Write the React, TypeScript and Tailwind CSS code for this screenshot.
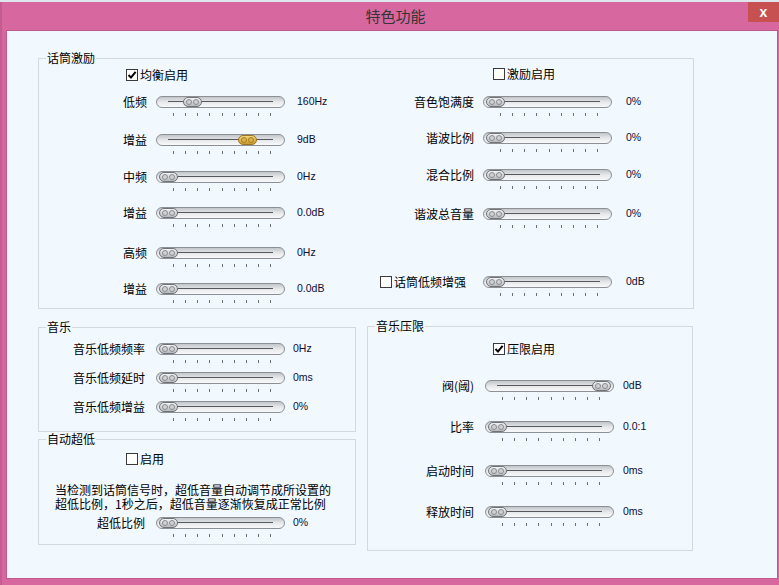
import type { ReactNode } from "react";
import clsx from "clsx";

const TICKS = [0, 1, 2, 3, 4, 5, 6, 7, 8];

function Slider({ pos = 0, gold = false }: { pos?: number; gold?: boolean }) {
  return (
    <div className="w-[129px] shrink-0">
      <div className="relative h-[12px] rounded-full border border-[#8c9094] bg-gradient-to-b from-[#c2c6ca] via-[#e6e8ea] to-[#f8f9fa]">
        <div className="absolute left-[11px] right-[11px] top-[4px] h-px bg-[#55595d]" />
        <div
          className={clsx(
            "absolute top-0 flex h-[10px] w-[19px] items-center justify-center gap-px rounded-full border",
            gold
              ? "border-[#9a7420] bg-gradient-to-b from-[#f3d77c] to-[#c8982c]"
              : "border-[#6f7377] bg-gradient-to-b from-[#f2f3f4] to-[#b6babe]"
          )}
          style={{ left: 2 + pos * 104 }}
        >
          <span
            className={clsx(
              "h-[6px] w-[6px] rounded-full border",
              gold ? "border-[#a67e24] bg-[#dcb24a]" : "border-[#8a8d90] bg-[#cfd1d3]"
            )}
          />
          <span
            className={clsx(
              "h-[6px] w-[6px] rounded-full border",
              gold ? "border-[#a67e24] bg-[#dcb24a]" : "border-[#8a8d90] bg-[#cfd1d3]"
            )}
          />
        </div>
      </div>
      <div className="mt-[5px] flex h-[3px] justify-between pl-[17px] pr-[14px]">
        {TICKS.map((i) => (
          <span key={i} className="h-[3px] w-px bg-[#6d7175]" />
        ))}
      </div>
    </div>
  );
}

function CheckBox({
  checked = false,
  label,
  className,
}: {
  checked?: boolean;
  label: string;
  className?: string;
}) {
  return (
    <div className={clsx("flex h-[12px] items-center gap-[2px]", className)}>
      <span className="flex h-[12px] w-[12px] shrink-0 items-center justify-center border border-[#3a3a3a] bg-white">
        {checked && (
          <svg width="10" height="10" viewBox="0 0 10 10">
            <path d="M1.5 5 L4 7.6 L8.6 1.8" fill="none" stroke="#000" strokeWidth="2" />
          </svg>
        )}
      </span>
      <span className="whitespace-nowrap text-[12px] leading-none">{label}</span>
    </div>
  );
}

function Row({
  label,
  value,
  pos,
  gold,
  className,
  labelCls,
  valueCls,
}: {
  label: ReactNode;
  value: string;
  pos?: number;
  gold?: boolean;
  className?: string;
  labelCls: string;
  valueCls: string;
}) {
  return (
    <div className={clsx("flex h-[20px] items-start", className)}>
      <div
        className={clsx(
          "flex h-[12px] shrink-0 items-center justify-end whitespace-nowrap text-[12px] leading-none",
          labelCls
        )}
      >
        {label}
      </div>
      <Slider pos={pos} gold={gold} />
      <div
        className={clsx(
          "flex h-[12px] items-center whitespace-nowrap font-['Liberation_Sans',sans-serif] text-[10.5px] text-[#0e0e34]",
          valueCls
        )}
      >
        {value}
      </div>
    </div>
  );
}

function Group({
  title,
  className,
  children,
}: {
  title: string;
  className?: string;
  children: ReactNode;
}) {
  return (
    <div className={clsx("relative border border-[#d4d9dd]", className)}>
      <span className="absolute -top-[8px] left-[7px] bg-[#f1f8fe] px-px text-[12px] leading-[14px]">
        {title}
      </span>
      {children}
    </div>
  );
}

export default function App() {
  const micL = "w-[108px] mr-[9px]";
  const micLv = "ml-[12px]";
  const micR = "w-[104px] mr-[9px]";
  const micRv = "ml-[14px]";
  const musL = "w-[106px] mr-[11px]";
  const musLv = "ml-[8px]";
  const limL = "w-[106px] mr-[11px]";
  const limLv = "ml-[9px]";

  return (
    <div className="h-[585px] w-[779px] overflow-hidden bg-[#d6689f] font-['Noto_Sans_CJK_SC',sans-serif] text-black">
      <div className="h-[2px] bg-[#dfe6ee]" />
      <div className="h-[583px] border-l-2 border-[#c45b91]">
        <div className="relative flex h-[28px] items-center justify-center pb-[1px] pl-[10px]">
          <span className="text-[15px] leading-none text-[#353535]">特色功能</span>
          <div className="absolute right-0 top-0 flex h-[20px] w-[31px] items-center justify-center bg-[#c75050] font-['Liberation_Sans',sans-serif] text-[14px] font-bold leading-none text-white">
            x
          </div>
        </div>
        <div className="ml-[4px] h-[549px] w-[772px] border border-[#bf5a8c] bg-[#f1f8fe] pl-[31px] pt-[27px]">
          <Group title="话筒激励" className="flex h-[251px] w-[656px]">
            <div className="w-[331px]">
              <CheckBox checked label="均衡启用" className="ml-[87px] mt-[10px]" />
              <Row label="低频" value="160Hz" pos={0.23} labelCls={micL} valueCls={micLv} className="mt-[15px]" />
              <Row label="增益" value="9dB" pos={0.76} gold labelCls={micL} valueCls={micLv} className="mt-[18px]" />
              <Row label="中频" value="0Hz" labelCls={micL} valueCls={micLv} className="mt-[17px]" />
              <Row label="增益" value="0.0dB" labelCls={micL} valueCls={micLv} className="mt-[16px]" />
              <Row label="高频" value="0Hz" labelCls={micL} valueCls={micLv} className="mt-[20px]" />
              <Row label="增益" value="0.0dB" labelCls={micL} valueCls={micLv} className="mt-[16px]" />
            </div>
            <div className="flex-1">
              <CheckBox label="激励启用" className="ml-[123px] mt-[9px]" />
              <Row label="音色饱满度" value="0%" labelCls={micR} valueCls={micRv} className="mt-[16px]" />
              <Row label="谐波比例" value="0%" labelCls={micR} valueCls={micRv} className="mt-[16px]" />
              <Row label="混合比例" value="0%" labelCls={micR} valueCls={micRv} className="mt-[17px]" />
              <Row label="谐波总音量" value="0%" labelCls={micR} valueCls={micRv} className="mt-[19px]" />
              <Row
                label={<CheckBox label="话筒低频增强" />}
                value="0dB"
                labelCls="w-[104px] mr-[9px] pr-[8px]"
                valueCls={micRv}
                className="mt-[48px]"
              />
            </div>
          </Group>

          <div className="mt-[17px] flex items-start gap-[11px]">
            <div className="w-[318px] pt-px">
              <Group title="音乐" className="h-[105px]">
                <Row label="音乐低频频率" value="0Hz" labelCls={musL} valueCls={musLv} className="mt-[15px]" />
                <Row label="音乐低频延时" value="0ms" labelCls={musL} valueCls={musLv} className="mt-[9px]" />
                <Row label="音乐低频增益" value="0%" labelCls={musL} valueCls={musLv} className="mt-[9px]" />
              </Group>
              <Group title="自动超低" className="mt-[7px] h-[106px]">
                <CheckBox label="启用" className="ml-[87px] mt-[13px]" />
                <div className="ml-[16px] mt-[18px] text-[12px] leading-[14px]">
                  <div className="h-[14px]">当检测到话筒信号时，超低音量自动调节成所设置的</div>
                  <div className="h-[14px]">超低比例，1秒之后，超低音量逐渐恢复成正常比例</div>
                </div>
                <Row label="超低比例" value="0%" labelCls={musL} valueCls={musLv} className="mt-[6px]" />
              </Group>
            </div>
            <Group title="音乐压限" className="h-[225px] w-[326px]">
              <CheckBox checked label="压限启用" className="ml-[125px] mt-[16px]" />
              <Row label="阀(阈)" value="0dB" pos={1} labelCls={limL} valueCls={limLv} className="mt-[25px]" />
              <Row label="比率" value="0.0:1" labelCls={limL} valueCls={limLv} className="mt-[21px]" />
              <Row label="启动时间" value="0ms" labelCls={limL} valueCls={limLv} className="mt-[24px]" />
              <Row label="释放时间" value="0ms" labelCls={limL} valueCls={limLv} className="mt-[21px]" />
            </Group>
          </div>
        </div>
      </div>
    </div>
  );
}
